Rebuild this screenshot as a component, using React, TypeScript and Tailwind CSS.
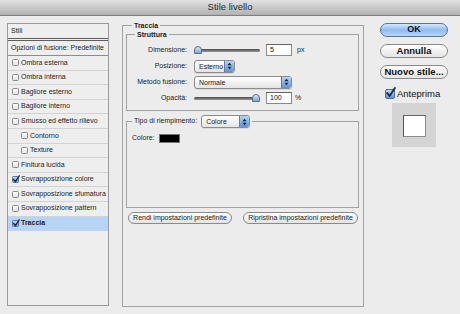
import React from "react"

const items: { label: string; indent?: boolean; checked?: boolean; active?: boolean }[] = [
  { label: "Ombra esterna" },
  { label: "Ombra interna" },
  { label: "Bagliore esterno" },
  { label: "Bagliore interno" },
  { label: "Smusso ed effetto rilievo" },
  { label: "Contorno", indent: true },
  { label: "Texture", indent: true },
  { label: "Finitura lucida" },
  { label: "Sovrapposizione colore", checked: true },
  { label: "Sovrapposizione sfumatura" },
  { label: "Sovrapposizione pattern" },
  { label: "Traccia", checked: true, active: true },
]

function Check({ checked, big }: { checked?: boolean; big?: boolean }) {
  return (
    <span
      className={
        big
          ? "relative shrink-0 w-[10px] h-[10px] rounded-[2px] border border-[#4a6d9c] bg-linear-to-b from-[#bcd6f5] to-[#5f95da]"
          : checked
            ? "relative shrink-0 w-[7px] h-[7px] rounded-[1.5px] border border-[#56759e] bg-linear-to-b from-[#c4daf4] to-[#6d9cdb]"
            : "relative shrink-0 w-[7px] h-[7px] rounded-[1.5px] border border-[#8a8a8a] bg-linear-to-b from-white to-[#e2e2e2]"
      }
    >
      {(checked || big) && (
        <svg
          viewBox="0 0 10 10"
          className={
            big
              ? "absolute -left-[1px] -top-[3px] w-[11px] h-[11px] overflow-visible"
              : "absolute -left-[1px] -top-[2px] w-[8px] h-[8px] overflow-visible"
          }
        >
          <path d="M2 5.5 L4.2 8.2 L9 1" fill="none" stroke="#1c2a40" strokeWidth="1.7" strokeLinecap="round" strokeLinejoin="round" />
        </svg>
      )}
    </span>
  )
}

function Stepper() {
  return (
    <span className="w-[10px] h-full shrink-0 rounded-r-[2px] border-l border-[#5a7fb5] bg-linear-to-b from-[#b9d3f3] to-[#5a92dc] flex items-center justify-center">
      <svg viewBox="0 0 6 9" className="w-[5px] h-[8px]">
        <path d="M3 0.5 L5.5 3.5 L0.5 3.5 Z" fill="#16243c" />
        <path d="M3 8.5 L5.5 5.5 L0.5 5.5 Z" fill="#16243c" />
      </svg>
    </span>
  )
}

function Popup({ label, className }: { label: string; className: string }) {
  return (
    <div
      className={`h-[13px] rounded-[3px] border border-[#8c8c8c] bg-linear-to-b from-white to-[#e4e4e4] flex items-stretch overflow-hidden shadow-[0_1px_0_rgba(0,0,0,0.08)] ${className}`}
    >
      <span className="flex-1 pl-[4px] text-[7px] leading-[11px] text-[#1a1a1a] whitespace-nowrap overflow-hidden">{label}</span>
      <Stepper />
    </div>
  )
}

function Slider({ at }: { at: "start" | "end" }) {
  return (
    <div className={`w-[66px] h-[9px] flex items-center ${at === "start" ? "justify-start" : "justify-end"} relative`}>
      <div className="absolute left-0 right-0 h-[3px] rounded-full bg-linear-to-b from-[#4a4a4a] to-[#9a9a9a]" />
      <div className="relative w-[8px] h-[8px] rounded-t-full rounded-b-[2px] border border-[#5a6f8e] bg-linear-to-b from-[#dbe7f6] to-[#7ea5d8]" />
    </div>
  )
}

function Field({ value }: { value: string }) {
  return (
    <div className="w-[26px] h-[12px] border border-[#8a8a8a] border-t-[#666] bg-white pl-[3px] text-[7px] leading-[10px] text-[#111]">
      {value}
    </div>
  )
}

function Row({ label, children }: { label: string; children: React.ReactNode }) {
  return (
    <div className="h-[16px] flex items-center">
      <span className="w-[60px] text-right text-[7px] text-[#222] shrink-0">{label}</span>
      <div className="ml-[7px] flex items-center">{children}</div>
    </div>
  )
}

function PillButton({ label, className }: { label: string; className: string }) {
  return (
    <div
      className={`h-[12px] rounded-full border border-[#8a8a8a] bg-linear-to-b from-white to-[#e3e3e3] flex items-center justify-center text-[7px] text-[#222] ${className}`}
    >
      {label}
    </div>
  )
}

function DialogButton({ label, primary }: { label: string; primary?: boolean }) {
  return (
    <div
      className={
        primary
          ? "w-[68px] h-[14px] rounded-full border border-[#55759f] bg-linear-to-b from-[#d6e8fb] via-[#8fbcef] to-[#b8d6f7] flex items-center justify-center text-[9px] font-bold text-[#111]"
          : "w-[68px] h-[14px] rounded-full border border-[#8a8a8a] bg-linear-to-b from-white to-[#e4e4e4] flex items-center justify-center text-[9.5px] font-bold text-[#111]"
      }
    >
      {label}
    </div>
  )
}

export default function App() {
  return (
    <div className="w-[460px] h-[314px] bg-[#ececec] flex flex-col font-['Liberation_Sans',Arial,sans-serif] overflow-hidden">
      {/* title bar */}
      <div className="h-[16px] shrink-0 border-b border-[#7e7e7e] bg-linear-to-b from-[#e2e2e2] to-[#b2b2b2] flex items-center justify-center">
        <span className="text-[9.5px] text-[#2a2a2a]">Stile livello</span>
      </div>

      <div className="flex pt-[5px] pl-[7px]">
        {/* styles list */}
        <div className="mt-[2px] w-[102px] h-[283px] border border-[#9a9a9a] bg-[#eeeeee] flex flex-col">
          <div className="h-[17px] border-b-[3px] border-double border-[#5e5e5e] pl-[3px] flex items-center text-[7px] text-[#222]">
            Stili
          </div>
          <div className="h-[15px] border-b border-[#8c8c8c] pl-[3px] flex items-center text-[7px] text-[#222]">
            Opzioni di fusione: Predefinite
          </div>
          {items.map((it) => (
            <div
              key={it.label}
              className={`h-[14.6px] flex items-center gap-[2px] border-b ${
                it.active ? "bg-[#b7d3f5] border-[#b7d3f5] font-bold" : "border-[#d3d3d3]"
              } ${it.indent ? "pl-[13px]" : "pl-[4px]"} text-[7px] text-[#222]`}
            >
              <Check checked={it.checked} />
              <span>{it.label}</span>
            </div>
          ))}
        </div>

        {/* Traccia group */}
        <fieldset className="ml-[13px] w-[242px] h-[286px] border border-[#a2a2a2] p-0 pl-[3px] pr-[4px]">
          <legend className="ml-[6px] px-[2px] text-[7px] leading-[9px] font-bold text-[#222]">Traccia</legend>

          <fieldset className="h-[81px] border border-[#a2a2a2] p-0">
            <legend className="ml-[8px] px-[2px] text-[7px] leading-[9px] font-bold text-[#222]">Struttura</legend>
            <div className="pt-[3px] flex flex-col">
              <Row label="Dimensione:">
                <Slider at="start" />
                <div className="ml-[6px]">
                  <Field value="5" />
                </div>
                <span className="ml-[5px] text-[7px] text-[#222]">px</span>
              </Row>
              <Row label="Posizione:">
                <Popup label="Esterno" className="w-[41px]" />
              </Row>
              <Row label="Metodo fusione:">
                <Popup label="Normale" className="w-[98px]" />
              </Row>
              <Row label="Opacità:">
                <Slider at="end" />
                <div className="ml-[6px]">
                  <Field value="100" />
                </div>
                <span className="ml-[3px] text-[7px] text-[#222]">%</span>
              </Row>
            </div>
          </fieldset>

          <fieldset className="mt-[4px] h-[93px] border border-[#a2a2a2] p-0">
            <legend className="ml-[5px] px-[2px] flex items-center gap-[4px]">
              <span className="text-[7px] text-[#222]">Tipo di riempimento:</span>
              <Popup label="Colore" className="w-[49px]" />
            </legend>
            <div className="mt-[5px] pl-[5px] flex items-center gap-[4px]">
              <span className="text-[7px] text-[#222]">Colore:</span>
              <span className="w-[21px] h-[9px] bg-black border border-[#777]" />
            </div>
          </fieldset>

          <div className="mt-[4px] pl-[2px] flex gap-[11px]">
            <PillButton label="Rendi impostazioni predefinite" className="w-[104px]" />
            <PillButton label="Ripristina impostazioni predefinite" className="w-[115px]" />
          </div>
        </fieldset>

        {/* right column */}
        <div className="ml-[16px] mt-[2px] flex flex-col">
          <div className="flex flex-col gap-[7px]">
            <DialogButton label="OK" primary />
            <DialogButton label="Annulla" />
            <DialogButton label="Nuovo stile..." />
          </div>
          <div className="mt-[8px] pl-[5px] flex items-center gap-[2px]">
            <Check big />
            <span className="text-[9.5px] text-[#111]">Anteprima</span>
          </div>
          <div className="mt-[2px] ml-[12px] w-[44px] h-[44px] bg-[#d4d4d4] flex items-center justify-center pt-[2px]">
            <div className="w-[23px] h-[22px] bg-white border border-[#8a8a8a] border-l-[#555] border-t-[#666]" />
          </div>
        </div>
      </div>
    </div>
  )
}
